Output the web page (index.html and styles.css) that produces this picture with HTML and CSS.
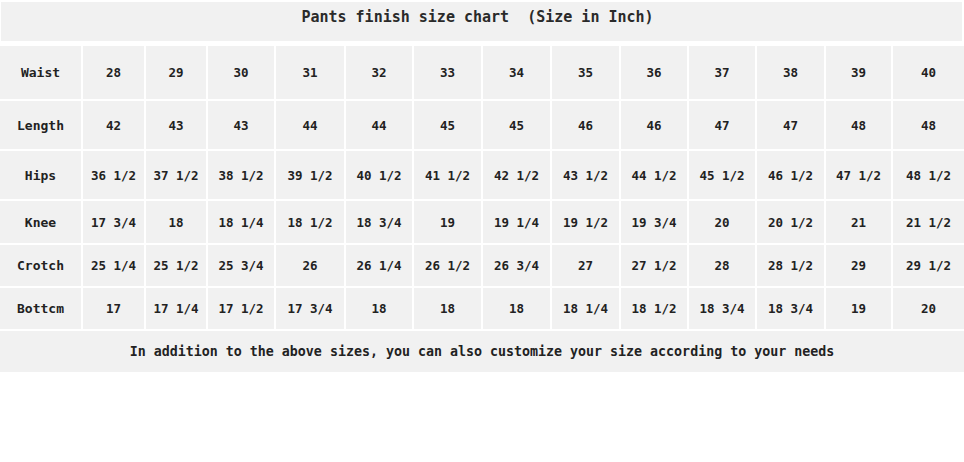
FILE: index.html
```html
<!DOCTYPE html>
<html>
<head>
<meta charset="utf-8">
<link rel="stylesheet" href="styles.css">
</head>
<body>
<div class="chart">
  <div class="title">Pants finish size chart&nbsp; (Size in Inch)</div>
  <div class="grid">
    <div class="cell label">Waist</div>
    <div class="cell">28</div><div class="cell">29</div><div class="cell">30</div><div class="cell">31</div><div class="cell">32</div><div class="cell">33</div><div class="cell">34</div><div class="cell">35</div><div class="cell">36</div><div class="cell">37</div><div class="cell">38</div><div class="cell">39</div><div class="cell">40</div>

    <div class="cell label">Length</div>
    <div class="cell">42</div><div class="cell">43</div><div class="cell">43</div><div class="cell">44</div><div class="cell">44</div><div class="cell">45</div><div class="cell">45</div><div class="cell">46</div><div class="cell">46</div><div class="cell">47</div><div class="cell">47</div><div class="cell">48</div><div class="cell">48</div>

    <div class="cell label">Hips</div>
    <div class="cell">36 1/2</div><div class="cell">37 1/2</div><div class="cell">38 1/2</div><div class="cell">39 1/2</div><div class="cell">40 1/2</div><div class="cell">41 1/2</div><div class="cell">42 1/2</div><div class="cell">43 1/2</div><div class="cell">44 1/2</div><div class="cell">45 1/2</div><div class="cell">46 1/2</div><div class="cell">47 1/2</div><div class="cell">48 1/2</div>

    <div class="cell label">Knee</div>
    <div class="cell">17 3/4</div><div class="cell">18</div><div class="cell">18 1/4</div><div class="cell">18 1/2</div><div class="cell">18 3/4</div><div class="cell">19</div><div class="cell">19 1/4</div><div class="cell">19 1/2</div><div class="cell">19 3/4</div><div class="cell">20</div><div class="cell">20 1/2</div><div class="cell">21</div><div class="cell">21 1/2</div>

    <div class="cell label">Crotch</div>
    <div class="cell">25 1/4</div><div class="cell">25 1/2</div><div class="cell">25 3/4</div><div class="cell">26</div><div class="cell">26 1/4</div><div class="cell">26 1/2</div><div class="cell">26 3/4</div><div class="cell">27</div><div class="cell">27 1/2</div><div class="cell">28</div><div class="cell">28 1/2</div><div class="cell">29</div><div class="cell">29 1/2</div>

    <div class="cell label">Bottcm</div>
    <div class="cell">17</div><div class="cell">17 1/4</div><div class="cell">17 1/2</div><div class="cell">17 3/4</div><div class="cell">18</div><div class="cell">18</div><div class="cell">18</div><div class="cell">18 1/4</div><div class="cell">18 1/2</div><div class="cell">18 3/4</div><div class="cell">18 3/4</div><div class="cell">19</div><div class="cell">20</div>

    <div class="cell note">In addition to the above sizes, you can also customize your size according to your needs</div>
  </div>
</div>
</body>
</html>
```
FILE: styles.css
```css
html, body {
  margin: 0;
  padding: 0;
  background: #ffffff;
}

.chart {
  width: 964px;
  padding-top: 2px;
  font-family: "DejaVu Sans Mono", "Liberation Mono", monospace;
  font-weight: bold;
  color: #222222;
}

.title {
  height: 39px;
  margin: 0 2px 0 1px;
  background: #f1f1f1;
  display: flex;
  align-items: center;
  justify-content: center;
  font-size: 15px;
  color: #2a2a2a;
  padding: 0 8px 10px 0;
  box-sizing: border-box;
}

.grid {
  margin-top: 5px;
  display: grid;
  grid-template-columns: 81px 61px 60px 66px 68px 66px 67px 67px 67px 66px 66px 67px 65px 71px;
  grid-template-rows: 53px 48px 48px 42px 41px 41px 41px;
  gap: 2px;
  background: #ffffff;
}

.cell {
  background: #f1f1f1;
  display: flex;
  align-items: center;
  justify-content: center;
  font-size: 12.5px;
  white-space: pre;
}

.label {
  font-size: 13px;
}

.note {
  grid-column: 1 / -1;
  font-size: 13.3px;
}
```
